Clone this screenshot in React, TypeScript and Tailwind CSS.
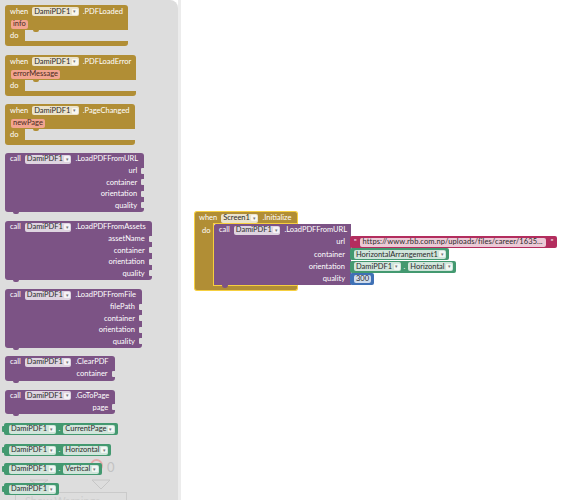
import React from "react";

function Dd({ label }: { label: string }) {
  return (
    <span className="inline-flex h-[9px] items-center gap-[1.5px] rounded-[2px] bg-white/75 pl-[2px] pr-[1px] text-[#2a2a2a]">
      <span>{label}</span>
      <span className="flex h-[6px] w-[6px] items-center justify-center rounded-[1px] bg-white/70 text-[5px] leading-none text-[#777]">▾</span>
    </span>
  );
}

function Param({ label }: { label: string }) {
  return <span className="inline-flex h-[9px] items-center rounded-[2px] bg-[#f2a48f] px-[2px] text-[#4a2a20]">{label}</span>;
}

function EventBlock({ name, param, mt }: { name: string; param: string; mt: string }) {
  return (
    <div className={`relative w-fit ${mt}`}>
      <div className="flex h-[13px] items-center gap-[4px] rounded-t-[3px] bg-[#b18e35] pl-[5px] pr-[5px] text-white">
        <span>when</span>
        <Dd label="DamiPDF1" />
        <span>{name}</span>
      </div>
      <div className="flex h-[12px] items-center bg-[#b18e35] pl-[6px]">
        <Param label={param} />
      </div>
      <div className="flex h-[11px]">
        <div className="flex w-[20px] items-center bg-[#b18e35] pl-[5px] text-white">do</div>
        <div className="relative flex-1">
          <span className="absolute left-[8px] top-0 h-[2px] w-[6px] rounded-b-[3px] bg-[#b18e35]" />
        </div>
      </div>
      <div className="h-[5px] rounded-b-[3px] bg-[#b18e35]" />
    </div>
  );
}

function Notch() {
  return <span className="absolute right-0 top-1/2 h-[6px] w-[3px] -translate-y-1/2 rounded-l-[1px] bg-[#dddddd]" />;
}

function CallBlock({ method, inputs, mt }: { method: string; inputs: string[]; mt: string }) {
  return (
    <div className={`relative w-fit ${mt}`}>
      <div className="rounded-[3px] bg-[#7c5385] pb-[1px] text-white">
        <div className="flex h-[12px] items-center gap-[4px] pl-[5px] pr-[6px]">
          <span>call</span>
          <Dd label="DamiPDF1" />
          <span>{method}</span>
        </div>
        {inputs.map((i) => (
          <div key={i} className="relative flex h-[11.5px] items-center justify-end pr-[7px]">
            <span>{i}</span>
            <Notch />
          </div>
        ))}
      </div>
      <span className="absolute bottom-[-2px] left-[8px] h-[2px] w-[6px] rounded-b-[3px] bg-[#7c5385]" />
    </div>
  );
}

function Getter({ prop, mt }: { prop?: string; mt: string }) {
  return (
    <div className={`relative ml-[-1px] flex h-[12px] w-fit items-center gap-[3px] rounded-[2px] bg-[#439970] pl-[5px] pr-[3px] text-white ${mt}`}>
      <span className="absolute left-[-2px] top-[3px] h-[6px] w-[2px] rounded-l-[1px] bg-[#439970]" />
      <Dd label="DamiPDF1" />
      {prop && (
        <>
          <span>.</span>
          <Dd label={prop} />
        </>
      )}
    </div>
  );
}

function Flyout() {
  return (
    <div className="relative h-[500px] w-[178px] shrink-0 overflow-hidden rounded-tr-[8px] bg-[#dddddd]">
      {/* workspace controls seen faintly behind the flyout */}
      <div className="absolute inset-0">
        <span className="absolute left-[32px] top-[458px] text-[8px] leading-none text-[#cdcdcd]">△</span>
        <span className="absolute left-[90px] top-[459px] h-[13px] w-[13px] rounded-full border-2 border-[#e2aaaa]" />
        <span className="absolute left-[107px] top-[461px] text-[13px] leading-none text-[#c2c2c2]">0</span>
        <svg className="absolute left-[29px] top-[479px]" width="20" height="8" viewBox="0 0 20 8">
          <path d="M1 1 L19 1 L10 7 Z" fill="none" stroke="#c6c6c6" strokeWidth="1" />
        </svg>
        <svg className="absolute left-[91px] top-[479px]" width="20" height="11" viewBox="0 0 20 11">
          <path d="M1 1 L19 1 L10 10 Z" fill="none" stroke="#c6c6c6" strokeWidth="1" />
        </svg>
        <div className="absolute left-[15px] top-[492px] h-[20px] w-[112px] border border-[#cacaca] pl-[9px] pt-[2px] text-[11px] leading-none text-[#cdcdcd]">
          Show Warnings
        </div>
      </div>
      <div className="relative flex flex-col items-start pl-[5px] pt-[5px]">
        <EventBlock name=".PDFLoaded" param="info" mt="mt-0" />
        <EventBlock name=".PDFLoadError" param="errorMessage" mt="mt-[9px]" />
        <EventBlock name=".PageChanged" param="newPage" mt="mt-[8px]" />
        <CallBlock method=".LoadPDFFromURL" inputs={["url", "container", "orientation", "quality"]} mt="mt-[8px]" />
        <CallBlock method=".LoadPDFFromAssets" inputs={["assetName", "container", "orientation", "quality"]} mt="mt-[9px]" />
        <CallBlock method=".LoadPDFFromFile" inputs={["filePath", "container", "orientation", "quality"]} mt="mt-[9px]" />
        <CallBlock method=".ClearPDF" inputs={["container"]} mt="mt-[8px]" />
        <CallBlock method=".GoToPage" inputs={["page"]} mt="mt-[9px]" />
        <Getter prop="CurrentPage" mt="mt-[9px]" />
        <Getter prop="Horizontal" mt="mt-[9px]" />
        <Getter prop="Vertical" mt="mt-[7px]" />
        <Getter mt="mt-[8px]" />
      </div>
    </div>
  );
}

function Plug({ children, bg }: { children: React.ReactNode; bg: string }) {
  return (
    <div className={`relative ml-[-1px] flex h-[12px] items-center gap-[3px] rounded-[2px] pl-[4px] pr-[3px] text-white ${bg}`}>
      {children}
    </div>
  );
}

function InitBlock() {
  const rows: [string, React.ReactNode][] = [
    [
      "url",
      <Plug bg="bg-[#b32d5e]">
        <span className="text-[7px]">"</span>
        <span className="inline-flex h-[9px] items-center rounded-[2px] bg-white/75 px-[3px] tracking-[0.1px] text-[#2a2a2a]">
          https://www.rbb.com.np/uploads/files/career/1635...
        </span>
        <span className="pl-[2px] pr-[1px] text-[7px]">"</span>
      </Plug>,
    ],
    [
      "container",
      <Plug bg="bg-[#439970]">
        <Dd label="HorizontalArrangement1" />
      </Plug>,
    ],
    [
      "orientation",
      <Plug bg="bg-[#439970]">
        <Dd label="DamiPDF1" />
        <span>.</span>
        <Dd label="Horizontal" />
      </Plug>,
    ],
    [
      "quality",
      <Plug bg="bg-[#3f71b5]">
        <span className="inline-flex h-[8px] items-center rounded-[2px] bg-white/75 px-[2px] text-[#2a2a2a]">300</span>
      </Plug>,
    ],
  ];
  return (
    <div className="absolute left-[13px] top-[211px]">
      <div className="relative flex h-[13px] w-[104px] items-center gap-[4px] rounded-t-[3px] border-x-[1.5px] border-t-[1.5px] border-[#f6cf3f] bg-[#b18e35] pl-[4px] text-white">
        <span>when</span>
        <Dd label="Screen1" />
        <span>.Initialize</span>
        <span className="absolute bottom-0 left-[18px] right-0 h-[1.5px] bg-[#f6cf3f]" />
      </div>
      <div className="flex">
        <div className="w-[19px] border-l-[1.5px] border-[#f6cf3f] bg-[#b18e35] pl-[7px] pt-[3px] text-white">do</div>
        <div className="relative flex flex-col border-l-[1px] border-[#f6cf3f]">
          <div className="flex h-[12px] w-[137px] items-center gap-[4px] rounded-tl-[2px] bg-[#7c5385] pl-[5px] text-white">
            <span>call</span>
            <Dd label="DamiPDF1" />
            <span>.LoadPDFFromURL</span>
          </div>
          {rows.map(([label, plug]) => (
            <div key={label} className="flex h-[12.25px] items-center">
              <div className="flex h-full w-[137px] items-center justify-end bg-[#7c5385] pr-[6px] text-white">{label}</div>
              {plug}
            </div>
          ))}
          <span className="absolute bottom-[-3px] left-[8px] z-10 h-[3px] w-[6px] rounded-b-[3px] bg-[#7c5385]" />
        </div>
      </div>
      <div className="relative h-[6px] w-[104px] rounded-b-[3px] border-x-[1.5px] border-b-[1.5px] border-[#f6cf3f] bg-[#b18e35]">
        <span className="absolute left-[17.5px] right-0 top-0 h-[1px] bg-[#f6cf3f]" />
      </div>
    </div>
  );
}

export default function App() {
  return (
    <div className="relative flex h-[500px] w-[579px] overflow-hidden bg-white font-['Lato',sans-serif] text-[7.5px] leading-none">
      <Flyout />
      <div className="w-[3px] shrink-0 bg-[#ececec]" />
      <div className="relative flex-1">
        <InitBlock />
      </div>
    </div>
  );
}
